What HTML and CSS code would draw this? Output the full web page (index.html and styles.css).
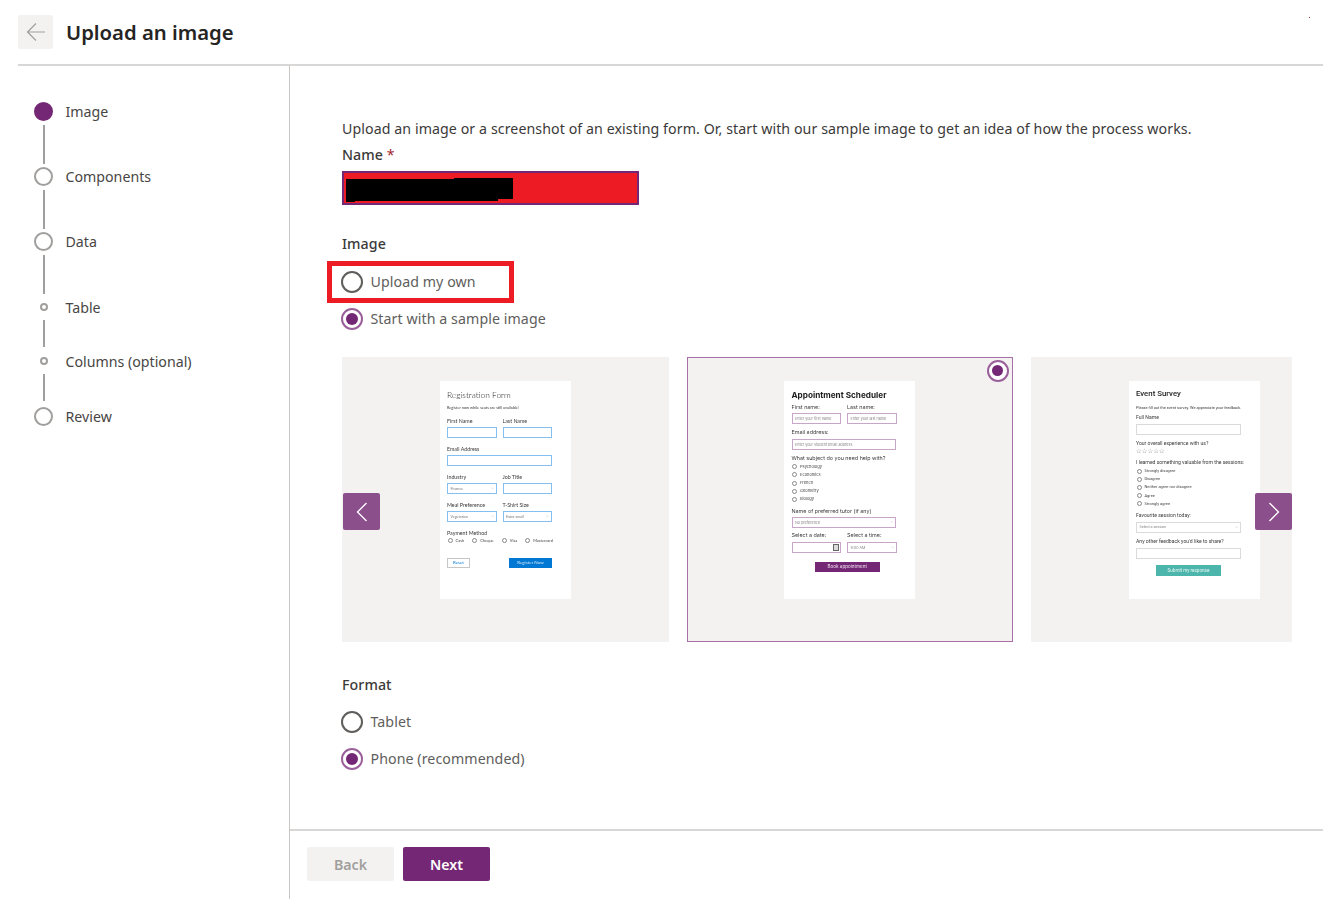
FILE: index.html
```html
<!DOCTYPE html>
<html lang="en">
<head>
<meta charset="utf-8">
<title>Upload an image</title>
<link rel="stylesheet" href="styles.css">
</head>
<body>
<div class="app">
  <span class="speck"></span>
  <header class="header">
    <button class="back-btn" aria-label="Back">
      <svg width="24" height="20" viewBox="0 0 24 20" fill="none" stroke="#a19f9d" stroke-width="1.2"><path d="M21 10H3.5M12 1.5 3.5 10l8.5 8.5"/></svg>
    </button>
    <h1 class="title">Upload an image</h1>
  </header>
  <div class="body">
    <nav class="sidebar">
      <div class="step step-big"><div class="rail"><span class="dot dot-active"></span><span class="line"></span></div><span class="step-label">Image</span></div>
      <div class="step step-big"><div class="rail"><span class="dot"></span><span class="line"></span></div><span class="step-label">Components</span></div>
      <div class="step step-big"><div class="rail"><span class="dot"></span><span class="line"></span></div><span class="step-label">Data</span></div>
      <div class="step step-small step-table"><div class="rail"><span class="dot dot-small"></span><span class="line"></span></div><span class="step-label">Table</span></div>
      <div class="step step-small step-columns"><div class="rail"><span class="dot dot-small"></span><span class="line"></span></div><span class="step-label">Columns (optional)</span></div>
      <div class="step step-big step-last"><div class="rail"><span class="dot"></span></div><span class="step-label">Review</span></div>
    </nav>
    <main class="main">
      <div class="content">
        <p class="intro">Upload an image or a screenshot of an existing form. Or, start with our sample image to get an idea of how the process works.</p>
        <div class="field-label name-label">Name <span class="req">*</span></div>
        <div class="name-input">
          <svg class="scribble" width="168" height="25" viewBox="0 0 168 25"><path d="M1 1 L109 1 L109 0 L168 0 L168 21 L153 21 L153 23 L10 23 L10 24 L1 24 Z" fill="#000"/></svg>
        </div>
        <div class="field-label image-label">Image</div>
        <div class="radio-row upload-row"><span class="radio"></span><span class="radio-text">Upload my own</span><span class="highlight"></span></div>
        <div class="radio-row sample-row"><span class="radio radio-on"></span><span class="radio-text">Start with a sample image</span></div>

        <div class="carousel">
          <div class="card">
            <div class="sheet sheet-reg">
              <div class="m-title">Registration Form</div>
              <div class="m-sub">Register now while seats are still available!</div>
              <div class="m-row m-first"><div><div class="m-label">First Name</div><div class="m-input"></div></div><div><div class="m-label">Last Name</div><div class="m-input"></div></div></div>
              <div class="m-field"><div class="m-label">Email Address</div><div class="m-input"></div></div>
              <div class="m-row"><div><div class="m-label">Industry</div><div class="m-input m-select">Finance<i class="m-caret">⌵</i></div></div><div><div class="m-label">Job Title</div><div class="m-input"></div></div></div>
              <div class="m-row"><div><div class="m-label">Meal Preference</div><div class="m-input m-select">Vegetarian<i class="m-caret">⌵</i></div></div><div><div class="m-label">T-Shirt Size</div><div class="m-input m-select">Extra small<i class="m-caret">⌵</i></div></div></div>
              <div class="m-field"><div class="m-label">Payment Method</div>
                <div class="m-pay"><span class="m-opt"><b class="m-circle"></b>Cash</span><span class="m-opt"><b class="m-circle"></b>Cheque</span><span class="m-opt"><b class="m-circle"></b>Visa</span><span class="m-opt"><b class="m-circle"></b>Mastercard</span></div>
              </div>
              <div class="m-actions"><span class="m-reset">Reset</span><span class="m-submit">Register Now</span></div>
            </div>
          </div>
          <div class="card card-selected">
            <span class="radio radio-on card-radio"></span>
            <div class="sheet sheet-appt">
              <div class="m-title">Appointment Scheduler</div>
              <div class="m-row m-first"><div><div class="m-label">First name:</div><div class="m-input">Enter your first name</div></div><div><div class="m-label">Last name:</div><div class="m-input">Enter your last name</div></div></div>
              <div class="m-field"><div class="m-label">Email address:</div><div class="m-input">Enter your student email address</div></div>
              <div class="m-field"><div class="m-label">What subject do you need help with?</div></div>
              <div class="m-list"><span class="m-opt"><b class="m-circle"></b>Psychology</span><span class="m-opt"><b class="m-circle"></b>Economics</span><span class="m-opt"><b class="m-circle"></b>French</span><span class="m-opt"><b class="m-circle"></b>Geometry</span><span class="m-opt"><b class="m-circle"></b>Biology</span></div>
              <div class="m-field m-tight"><div class="m-label">Name of preferred tutor (if any)</div><div class="m-input m-select">No preference<i class="m-caret">⌵</i></div></div>
              <div class="m-row m-tight"><div><div class="m-label">Select a date:</div><div class="m-input m-select"><i class="m-cal"></i></div></div><div><div class="m-label">Select a time:</div><div class="m-input m-select">9:00 AM<i class="m-caret">⌵</i></div></div></div>
              <div class="m-center"><span class="m-book">Book appointment</span></div>
            </div>
          </div>
          <div class="card">
            <div class="sheet sheet-survey">
              <div class="m-title">Event Survey</div>
              <div class="m-sub">Please fill out the event survey. We appreciate your feedback.</div>
              <div class="m-field m-name"><div class="m-label">Full Name</div><div class="m-input"></div></div>
              <div class="m-field"><div class="m-label">Your overall experience with us?</div><div class="m-stars">☆☆☆☆☆</div></div>
              <div class="m-field"><div class="m-label">I learned something valuable from the sessions:</div></div>
              <div class="m-list"><span class="m-opt"><b class="m-circle"></b>Strongly disagree</span><span class="m-opt"><b class="m-circle"></b>Disagree</span><span class="m-opt"><b class="m-circle"></b>Neither agree nor disagree</span><span class="m-opt"><b class="m-circle"></b>Agree</span><span class="m-opt"><b class="m-circle"></b>Strongly agree</span></div>
              <div class="m-field m-tight"><div class="m-label">Favourite session today:</div><div class="m-input m-select">Select a session<i class="m-caret">⌵</i></div></div>
              <div class="m-field"><div class="m-label">Any other feedback you'd like to share?</div><div class="m-input"></div></div>
              <div class="m-center m-center-survey"><span class="m-go">Submit my response</span></div>
            </div>
          </div>
          <button class="arrow arrow-left" aria-label="Previous"><svg width="14" height="22" viewBox="0 0 14 22" fill="none" stroke="#fff" stroke-width="1.3"><path d="M11.5 2 2.5 11l9 9"/></svg></button>
          <button class="arrow arrow-right" aria-label="Next"><svg width="14" height="22" viewBox="0 0 14 22" fill="none" stroke="#fff" stroke-width="1.3"><path d="M2.5 2l9 9-9 9"/></svg></button>
        </div>

        <div class="field-label format-label">Format</div>
        <div class="radio-row tablet-row"><span class="radio"></span><span class="radio-text">Tablet</span></div>
        <div class="radio-row phone-row"><span class="radio radio-on"></span><span class="radio-text">Phone (recommended)</span></div>
      </div>
      <footer class="footer">
        <button class="btn btn-back">Back</button>
        <button class="btn btn-next">Next</button>
      </footer>
    </main>
  </div>
</div>
</body>
</html>
```

FILE: styles.css
```css
* { box-sizing: border-box; }
html, body { margin: 0; padding: 0; background: #fff; }
body { font-family: "Noto Sans", "Open Sans", sans-serif; color: #323130; }
.app { position: relative; width: 1323px; height: 899px; display: flex; flex-direction: column; overflow: hidden; }
.speck { position: absolute; left: 1309px; top: 17px; width: 1px; height: 1px; background: #a33; }

.header { height: 66px; margin-left: 18px; border-bottom: 2px solid #d8d7d5; display: flex; align-items: flex-start; padding-top: 15px; }
.back-btn { width: 35px; height: 34px; border: 0; border-radius: 2px; background: #f3f2f1; padding: 0; display: flex; align-items: center; justify-content: center; }
.title { margin: 0 0 0 13px; font-size: 20.3px; line-height: 35px; font-weight: 600; color: #252423; }

.body { flex: 1; display: flex; min-height: 0; }
.sidebar { width: 290px; flex: none; border-right: 1px solid #c8c6c4; padding: 36px 0 0 34px; }
.step { display: flex; align-items: flex-start; gap: 12.5px; }
.step-big { height: 65px; }
.step-table { height: 54px; margin-top: 6px; }
.step-columns { height: 50px; }
.rail { width: 19px; display: flex; flex-direction: column; align-items: center; }
.dot { width: 19px; height: 19px; border-radius: 50%; border: 2px solid #a19f9d; background: #fff; flex: none; }
.dot-active { background: #742774; border-color: #742774; }
.dot-small { width: 8px; height: 8px; }
.line { width: 2px; height: 39px; margin-top: 4px; background: #a19f9d; }
.step-table .line, .step-columns .line { height: 27px; margin-top: 9px; }
.step-label { font-size: 14.2px; line-height: 19px; color: #484644; }
.step-table .step-label, .step-columns .step-label { margin-top: -5.5px; }

.main { flex: 1; min-width: 0; display: flex; flex-direction: column; }
.content { flex: 1; padding: 53px 0 0 52px; letter-spacing: 0.08px; }
.intro { margin: 0; font-size: 14.2px; line-height: 20px; color: #3b3a39; }
.field-label { font-size: 14.2px; line-height: 20px; font-weight: 500; color: #3b3a39; }
.name-label { margin-top: 6px; }
.req { color: #a4262c; font-weight: 400; }
.name-input { position: relative; width: 297px; height: 34px; margin-top: 6px; border: 2px solid #742774; background: #ed1c24; }
.scribble { position: absolute; left: 1px; top: 5px; }
.image-label { margin-top: 29px; }
.radio-row { position: relative; display: flex; align-items: center; gap: 7.5px; height: 22px; }
.upload-row { margin-top: 17px; }
.sample-row { margin-top: 15px; }
.radio { width: 22px; height: 22px; border-radius: 50%; border: 2px solid #605e5c; background: #fff; flex: none; margin-left: -1px; display: flex; align-items: center; justify-content: center; }
.radio-on { border-color: #9a5f9a; }
.radio-on::after { content: ""; width: 12px; height: 12px; border-radius: 50%; background: #742774; }
.radio-text { font-size: 14.2px; line-height: 20px; color: #605e5c; }
.highlight { position: absolute; left: -15px; top: -10px; width: 187px; height: 42px; border: 5px solid #ed1c24; pointer-events: none; }

.carousel { position: relative; width: 950px; height: 285px; margin-top: 27px; display: flex; gap: 18px; overflow: hidden; }
.card { position: relative; flex: none; width: 326.5px; height: 285px; background: #f3f2f1; padding: 24px 0 0 98px; }
.card-selected { border: 1.5px solid #a66fa6; padding: 22.5px 0 0 96.5px; }
.card-radio { position: absolute; right: 3.5px; top: 1.5px; margin: 0; }
.card-radio::after { width: 11px; height: 11px; }
.arrow { position: absolute; top: 136px; width: 37px; height: 37px; padding: 0; border: 0; border-radius: 2px; background: #8b4f8b; display: flex; align-items: center; justify-content: center; }
.arrow-left { left: 1px; }
.arrow-right { right: 0; }

.sheet { width: 131px; height: 218px; background: #fff; padding: 9px 19px 0 7px; color: #3a3a3a; filter: blur(0.5px); font-family: "Lato", sans-serif; letter-spacing: 0; }
.m-title { font-size: 8.4px; line-height: 10px; white-space: nowrap; font-weight: 300; color: #222; }
.m-sub { font-size: 3.9px; line-height: 5px; margin-top: 4.5px; white-space: nowrap; }
.m-label { font-size: 5.3px; line-height: 6px; white-space: nowrap; }
.m-row { display: grid; grid-template-columns: 49.5px 49.5px; column-gap: 6px; margin-top: 8px; }
.m-field { margin-top: 8px; }
.m-first { margin-top: 8px; }
.m-input { position: relative; height: 11px; margin-top: 3px; border: 1px solid #84bff0; background: #fff; font-size: 3.7px; line-height: 9px; padding-left: 2.5px; color: #777; white-space: nowrap; overflow: hidden; }
.m-select { }
.m-caret { position: absolute; right: 2px; top: 0; font-style: normal; font-size: 4px; line-height: 8px; color: #888; }
.m-opt { display: inline-flex; align-items: center; gap: 3px; font-size: 4px; line-height: 8.2px; color: #444; white-space: nowrap; }
.m-circle { display: block; width: 5px; height: 5px; border-radius: 50%; border: 0.5px solid #888; background: #fff; flex: none; margin-left: 0.5px; }
.m-pay { display: flex; gap: 7.5px; margin-top: 1px; }
.m-actions { display: flex; justify-content: space-between; align-items: flex-start; margin-top: 13px; }
.m-reset { width: 23px; height: 10px; border: 1px solid #c8c6c4; font-size: 4.5px; line-height: 8px; text-align: center; color: #0078d4; }
.m-submit { width: 43px; height: 10px; background: #0078d4; color: #cfe6f8; font-size: 4.5px; line-height: 10px; text-align: center; }
.m-list { display: flex; flex-direction: column; align-items: flex-start; margin-top: 2px; }
.m-center { display: flex; justify-content: center; }

.sheet-appt { font-family: "Inter", sans-serif; padding-left: 7.5px; }
.sheet-appt .m-title { font-weight: 700; font-size: 8.2px; color: #1d1d1d; }
.sheet-appt .m-first { margin-top: 4px; }
.sheet-appt .m-input { margin-top: 3.5px; border-color: #c9a6c9; color: #888; font-size: 3.7px; }
.sheet-appt .m-field { margin-top: 5px; }
.sheet-appt .m-row.m-tight, .sheet-appt .m-field.m-tight { margin-top: 4px; }
.sheet-appt .m-label { font-size: 5.4px; }
.m-cal { position: absolute; right: 1px; top: 1px; width: 6px; height: 7px; border: 1px solid #666; background: #ddd; }
.m-center { margin-top: 9.5px; padding-left: 7px; }
.m-book { width: 65px; height: 10px; background: #742774; color: #f0e4f0; font-size: 4.6px; line-height: 10px; text-align: center; white-space: nowrap; }

.sheet-survey { font-family: "Roboto", sans-serif; padding-top: 8px; }
.sheet-survey .m-title { font-weight: 500; font-size: 7.8px; color: #1d1d1d; }
.sheet-survey .m-sub { margin-top: 5.5px; }
.sheet-survey .m-label { font-size: 5.1px; }
.sheet-survey .m-name { margin-top: 5px; }
.sheet-survey .m-input { margin-top: 4px; border-color: #dcdad8; color: #888; width: 105px; }
.sheet-survey .m-field { margin-top: 5px; }
.sheet-survey .m-field.m-name { margin-top: 4.5px; }
.sheet-survey .m-field.m-tight { margin-top: 4px; }
.m-stars { font-size: 6.4px; line-height: 6px; margin-top: 2px; color: #777; font-family: "DejaVu Sans", sans-serif; white-space: nowrap; }
.sheet-survey .m-center-survey { margin-top: 5.5px; padding-left: 0; }
.m-go { width: 65px; height: 11px; background: #4db6ac; color: #e6f6f4; font-size: 4.6px; line-height: 11px; text-align: center; white-space: nowrap; }

.format-label { margin-top: 33px; }
.tablet-row { margin-top: 16px; }
.phone-row { margin-top: 15px; }

.footer { height: 70px; border-top: 2px solid #d8d7d5; display: flex; gap: 9px; padding: 16px 0 0 17px; }
.btn { width: 87px; height: 34px; border: 0; border-radius: 2px; font-family: inherit; font-size: 14.2px; font-weight: 600; padding: 0; }
.btn-back { background: #f3f2f1; color: #a19f9d; }
.btn-next { background: #742774; color: #fff; }
```
